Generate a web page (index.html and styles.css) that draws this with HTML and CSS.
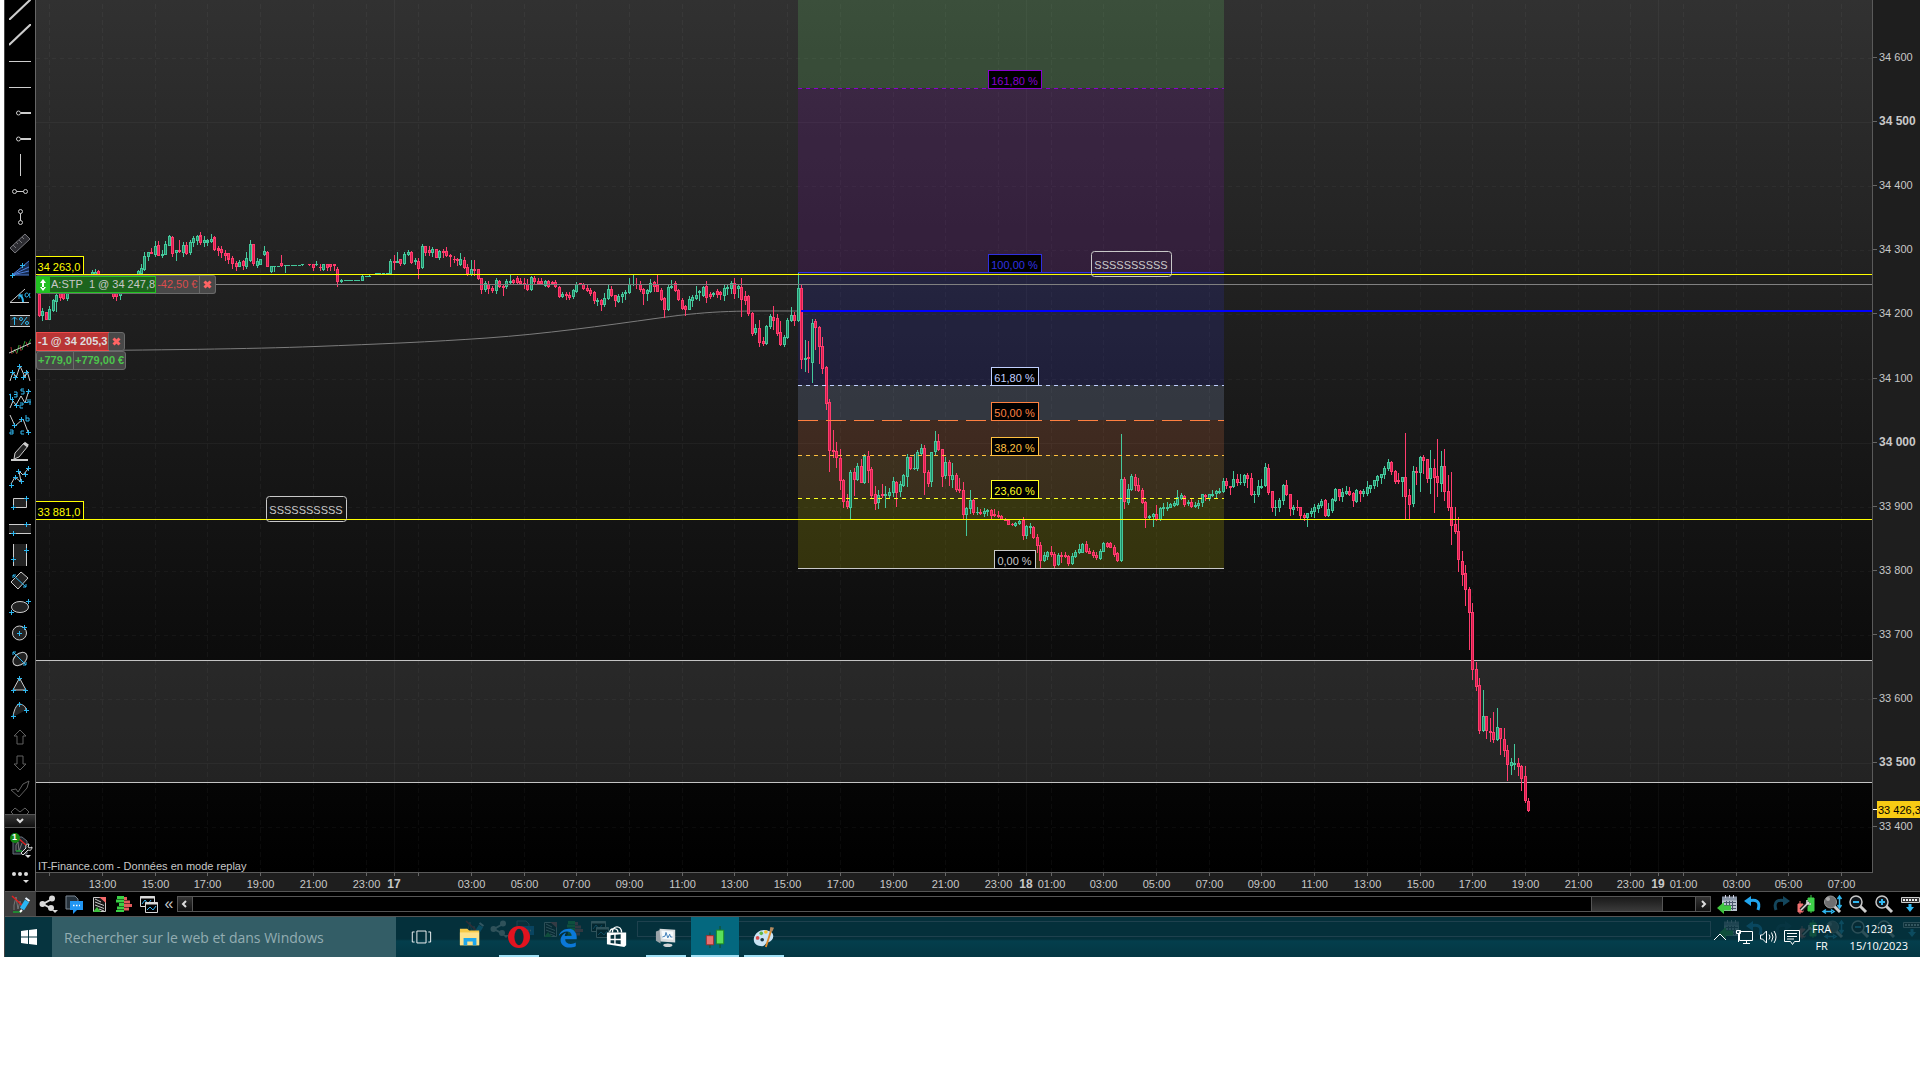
FILE: index.html
```
<!DOCTYPE html>
<html lang="fr">
<head>
	<meta charset="utf-8">
	<title>IT-Finance.com</title>
	<link rel="stylesheet" href="styles.css">
</head>
<body>
<svg class="defs" width="0" height="0">
	<symbol id="i-pencil" viewBox="0 0 24 24"><g fill="none"><path d="M5 18v-5l2-8 2 12 2-8 2 8" stroke="#777"/><path d="M3 4L14 14" stroke="#e02020" stroke-width="1.500"/><path d="M4 20h8" stroke="#19a030" stroke-width="1.500"/><path d="M13 17L18 9" stroke="#29b5f5" stroke-width="5"/><path d="M16.500 6l4 3" stroke="#e8f4ff" stroke-width="2"/><path d="M11 20l2-2" stroke="#fff" stroke-width="2"/></g></symbol>
	<symbol id="i-share" viewBox="0 0 24 24"><g fill="#d8d8d8" stroke="#d8d8d8" stroke-width="2"><path d="M15 7L6 12l9 5" fill="none"/><circle cx="15" cy="6.500" r="2"/><circle cx="5.500" cy="12" r="2"/><circle cx="14" cy="16" r="2"/><path d="M15 18h6l-3 3z" stroke="none"/></g></symbol>
	<symbol id="i-chat" viewBox="0 0 24 24"><path d="M4 4h9l3 3v10H4z" fill="#26323c" stroke="#7c8894"/><path d="M8 9h13v9h-6l-4 4v-4H8z" fill="#2196f3"/><path d="M11 13.500h7" stroke="#fff" stroke-width="1.500" stroke-dasharray="1.500 1.500"/></symbol>
	<symbol id="i-doc" viewBox="0 0 24 24"><path d="M6.500 5.500h12v14h-12z" fill="#151515" stroke="#ccc"/><path d="M8 7l6 3M8 10l9 3.500M8 13l9 3.500M12 17l5 2" stroke="#ccc"/><path d="M12 5h7v6z" fill="#f46a6a"/><path d="M6 20l4-5 4 5z" fill="#3fc13f"/></symbol>
	<symbol id="i-depth" viewBox="0 0 24 24"><path d="M5 4h7v3H5zM4 7.500h8v3H4zM7 11h5v3H7zM5 14.500h7v3H5zM4 18h8v2H4z" fill="#39d045"/><path d="M12 5h3v3h-3zM12 8.500h6v3h-6zM12 12h8v3h-8zM12 15.500h5v3h-5z" fill="#e25b5b"/></symbol>
	<symbol id="i-windows" viewBox="0 0 24 24"><g fill="#000" stroke="#d8d8d8"><path d="M3.500 4.500h14v10h-14z"/><path d="M3 5.500h15" stroke-width="2"/><path d="M5 12l3-4 3 4 3-4" fill="none" stroke="#30b0f0"/><path d="M8.500 10.500h12v10h-12z"/><path d="M8 11.500h13" stroke-width="2"/><path d="M10 18l3-3 3 3 3-4" fill="none" stroke="#30b0f0"/></g></symbol>
	<symbol id="i-calendar" viewBox="0 0 24 24"><path d="M6 5h15v14H6z" fill="#b9c4d0"/><path d="M6 6.500h15" stroke="#8a97a8" stroke-width="4"/><path d="M9.500 3v3M13.500 3v3M17.500 3v3" stroke="#ccd"/><path d="M8 10.500h12M8 13.500h12M8 16.500h12M10.500 9v9M13.500 9v9M16.500 9v9" stroke="#49566a"/><path d="M1 16l7-6v3.500h7v5H8V22z" fill="#3fc63f"/></symbol>
	<symbol id="i-undo" viewBox="0 0 24 24"><path d="M6 9c8-2 13 0 10 9" fill="none" stroke="#21a6ef" stroke-width="3"/><path d="M2 9l7-5v10z" fill="#21a6ef"/></symbol>
	<symbol id="i-redo" viewBox="0 0 24 24"><path d="M18 9c-8-2-13 0-10 9" fill="none" stroke="#14465c" stroke-width="3"/><path d="M22 9l-7-5v10z" fill="#14465c"/></symbol>
	<symbol id="i-setup" viewBox="0 0 24 24"><path d="M4 12h5v8H4zM6 9v13" fill="#f07070" stroke="#f07070"/><path d="M14 6h6v13h-6zM17 3v18" fill="#3fd04a" stroke="#3fd04a"/><path d="M7 18l8-8" stroke="#222" stroke-width="4"/><path d="M7 18l8-8M13 8v4h4" stroke="#ddd" stroke-width="1.500" fill="none"/></symbol>
	<symbol id="i-zoomfit" viewBox="0 0 24 24"><path d="M14 14l6 6" stroke="#ccc" stroke-width="3"/><circle cx="10.500" cy="10" r="6" fill="#6e6e70" stroke="#999"/><circle cx="8" cy="7" r="2" fill="#aaa"/><path d="M19.500 5v10M17.500 7l2-3 2 3M17.500 13l2 3 2-3M4 19.500h8M6 17.500l-3 2 3 2M11 17.500l3 2-3 2" fill="none" stroke="#30b8f0" stroke-width="1.500"/></symbol>
	<symbol id="i-zoomout" viewBox="0 0 24 24"><path d="M14 14l6 6" stroke="#ccc" stroke-width="3"/><circle cx="10" cy="10" r="6" fill="#10151a" stroke="#c8c8c8" stroke-width="1.500"/><path d="M7 10h6" stroke="#30b8f0" stroke-width="2"/></symbol>
	<symbol id="i-zoomin" viewBox="0 0 24 24"><path d="M14 14l6 6" stroke="#ccc" stroke-width="3"/><circle cx="10" cy="10" r="6" fill="#10151a" stroke="#c8c8c8" stroke-width="1.500"/><path d="M7 10h6M10 7v6" stroke="#30b8f0" stroke-width="2"/></symbol>
	<symbol id="i-collapse" viewBox="0 0 24 24"><path d="M3.500 5.500h18v5h-18z" fill="#333" stroke="#ccc"/><path d="M5 8h15" stroke="#eee" stroke-width="2" stroke-dasharray="2 1"/><path d="M12 12v5" stroke="#30b8f0" stroke-width="3"/><path d="M8 15h8l-4 5z" fill="#30b8f0"/></symbol>
</svg>

<div class="app">
	<div class="workspace">
		<aside class="sidebar">
			<div class="tools">
				<button class="tool" aria-label="Ligne"><svg viewBox="0 0 22 22"><path d="M0 22L22 1" stroke-width="2"/></svg></button>
				<button class="tool" aria-label="Segment"><svg viewBox="0 0 22 22"><path d="M0 21L22 0" stroke-width="2"/></svg></button>
				<button class="tool" aria-label="Horizontale"><svg viewBox="0 0 22 22"><path d="M0 11.500h22"/></svg></button>
				<button class="tool" aria-label="Horizontale 2"><svg viewBox="0 0 22 22"><path d="M0 11.500h22"/></svg></button>
				<button class="tool" aria-label="Demi-droite"><svg viewBox="0 0 22 22"><circle cx="9.500" cy="11" r="2"/><path d="M12 11h10" stroke-width="2"/></svg></button>
				<button class="tool" aria-label="Demi-droite 2"><svg viewBox="0 0 22 22"><circle cx="9.500" cy="11" r="2"/><path d="M12 11h10" stroke-width="2"/></svg></button>
				<button class="tool" aria-label="Verticale"><svg viewBox="0 0 22 22"><path d="M11.500 0v22"/></svg></button>
				<button class="tool" aria-label="Segment horizontal"><svg viewBox="0 0 22 22"><circle cx="5.500" cy="11.500" r="2"/><circle cx="16.500" cy="11.500" r="2"/><path d="M7.500 11.500h7"/></svg></button>
				<button class="tool" aria-label="Segment vertical"><svg viewBox="0 0 22 22"><circle cx="11.500" cy="5.500" r="2"/><circle cx="11.500" cy="16.500" r="2"/><path d="M11.500 7.500v7"/></svg></button>
				<button class="tool" aria-label="Règle"><svg viewBox="0 0 22 22"><path d="M1 16L16 2l5 5L6 21z" fill="#2b2b30" stroke="#77777c"/><path d="M4 13l3 3M7 10l2 2M10 8l3 3M13 5l2 2" stroke="#77777c"/></svg></button>
				<button class="tool" aria-label="Eventail"><svg viewBox="0 0 22 22"><path d="M3 17L20 3v14z" fill="#15294d" stroke="none"/><path d="M3 17L20 3M3 17l17-8M3 17l17-4M3 17h17" stroke="#4d7fd8"/><path class="c" d="M1 17.500h5M3.500 15v5M11 7.500h5M13.500 5v5"/></svg></button>
				<button class="tool" aria-label="Angle"><svg viewBox="0 0 22 22"><path d="M20 18.500H1L16 5"/><path class="c" d="M10 11c3 1 4 4 4 7" stroke-width="2"/><path class="c" d="M10 15v-4h4"/><path class="c" d="M21 9c-2 5-5 5-5 2s4-3 5 3"/></svg></button>
				<button class="tool" aria-label="Pourcentage"><svg viewBox="0 0 22 22"><path d="M1 5h20v11H1z" fill="#222" stroke="none"/><path d="M1 5.500h20M1 16.500h20"/><path class="c" d="M5.500 15V7M3 9.500L5.500 7 8 9.500M12 15l6-8"/><circle class="c" cx="12" cy="9" r="1.500"/><circle class="c" cx="18" cy="13" r="1.500"/></svg></button>
				<button class="tool" aria-label="Régression"><svg viewBox="0 0 22 22"><path d="M2 11l1 7M6 14l2 4M11 9l1 6M17 6l2 5" stroke="#a03030"/><path d="M4 17l2-4M8 17l2-8M13 14l3-9M19 9l3-6" stroke="#2b9a34"/><path d="M0 17L22 7"/></svg></button>
				<button class="tool" aria-label="Figure"><svg viewBox="0 0 22 22"><path d="M1 19l3-9 3 6 4-12 5 11 2-6 3 10"/><path class="c" d="M1 10.500h5M3.500 8v5M8 4.500h5M10.500 2v5M15 10.500h5M17.500 8v5M4 15.500h5M6.500 13v5M12 15.500h5M14.500 13v5"/></svg></button>
				<button class="tool" aria-label="Vagues 12345"><svg viewBox="0 0 22 22"><path d="M1 20l3-7 3 4 5-9 4 7 4-13"/><path class="c" d="M0 7l1.500-1v5M5 4h3v5H5M5 6.500h3M15 1h-3v2h3v3h-3M11 15h3v2h-3v3h3M19 11v3h3M21 11v6M1 11.500h4M17 3.500h5M5 17.500h5M15 14.500h4M3.500 9v5M19.500 1v5M7.500 15v5"/></svg></button>
				<button class="tool" aria-label="Vagues abc"><svg viewBox="0 0 22 22"><path d="M1 1l5 11 8-7 5 13"/><path class="c" d="M17 1v6h3V4h-3M1 16h3v4H1v-2h3M15 17h-3v3h3M3 11.500h5M5.500 9v5M10 5.500h5M12.500 3v5M17 18.500h5M19.500 16v5"/></svg></button>
				<button class="tool" aria-label="Crayon"><svg viewBox="0 0 22 22"><path d="M6 13L15 3l4 3-9 11-5 2z" fill="#222"/><path d="M15 3l4 3" stroke-width="3"/><path d="M2 20h17" stroke-width="2"/></svg></button>
				<button class="tool" aria-label="Polyligne"><svg viewBox="0 0 22 22"><path d="M2 18L6 11l6 5-2-11 4 4 5-6"/><path class="c" d="M0 19.500h5M2.500 17v5M4 11.500h5M6.500 9v5M7 5.500h5M9.500 3v5M10 15.500h5M12.500 13v5M14 8.500h5M16.500 6v5M17 2.500h5M19.500 0v5"/></svg></button>
				<button class="tool" aria-label="Rectangle"><svg viewBox="0 0 22 22"><path d="M4.500 6.500h13v9h-13z" fill="#222"/><path class="c" d="M2 15.500h5M4.500 13v5M15 6.500h5M17.500 4v5"/></svg></button>
				<button class="tool" aria-label="Bande horizontale"><svg viewBox="0 0 22 22"><path d="M0 7h22v9H0z" fill="#222" stroke="none"/><path d="M0 6.500h22M0 15.500h22"/><path class="c" d="M2 15.500h5M4.500 13v5M15 6.500h5M17.500 4v5"/></svg></button>
				<button class="tool" aria-label="Bande verticale"><svg viewBox="0 0 22 22"><path d="M4 0h14v22H4z" fill="#222" stroke="none"/><path d="M4.500 0v22M17.500 0v22"/><path class="c" d="M2 15.500h5M4.500 13v5M15 6.500h5M17.500 4v5"/></svg></button>
				<button class="tool" aria-label="Rectangle incliné"><svg viewBox="0 0 22 22"><path d="M2 12L12 2l7 6L9 19z" fill="#222"/><path class="c" d="M4 5l13 12M4 8V5h3M17 14v3h-3"/></svg></button>
				<button class="tool" aria-label="Ellipse"><svg viewBox="0 0 22 22"><ellipse cx="11" cy="11" rx="8.500" ry="5.500" fill="#222"/><path class="c" d="M0 16.500h5M2.500 14v5M17 5.500h5M19.500 3v5"/></svg></button>
				<button class="tool" aria-label="Cercle"><svg viewBox="0 0 22 22"><circle cx="10.500" cy="11" r="7" fill="#222"/><path class="c" d="M8 11.500h5M10.500 9v5M13 5.500h5M15.500 3v5"/></svg></button>
				<button class="tool" aria-label="Ellipse inclinée"><svg viewBox="0 0 22 22"><ellipse cx="11" cy="11" rx="8" ry="5.500" transform="rotate(-40 11 11)" fill="#222"/><path class="c" d="M4 4l13 13M4 7V4h3M17 14v3h-3"/></svg></button>
				<button class="tool" aria-label="Triangle"><svg viewBox="0 0 22 22"><path d="M4 16L10.500 4 17 16z" fill="#222"/><path class="c" d="M8 4.500h5M10.500 2v5M2 16.500h5M4.500 14v5M14 16.500h5M16.500 14v5"/></svg></button>
				<button class="tool" aria-label="Arc"><svg viewBox="0 0 22 22"><path d="M4 17C5 8 9 3 11 4c4 1 6 3 6 6z" fill="#222" stroke="none"/><path d="M4 17C5 8 9 3 11 4c4 1 6 3 6 6"/><path class="c" d="M8 4.500h5M10.500 2v5M2 16.500h5M4.500 14v5M15 10.500h5M17.500 8v5"/></svg></button>
				<button class="tool off" aria-label="Flèche haut"><svg viewBox="0 0 22 22"><path d="M11 4l6 6h-3v8H8v-8H5z"/></svg></button>
				<button class="tool off" aria-label="Flèche bas"><svg viewBox="0 0 22 22"><path d="M11 18l6-6h-3V4H8v8H5z"/></svg></button>
				<button class="tool off" aria-label="Coche"><svg viewBox="0 0 22 22"><path d="M2 12l5-1 2 3 5-8 6-3-2 7-8 9z"/></svg></button>
				<button class="tool off" aria-label="Croix"><svg viewBox="0 0 22 22"><path d="M2 8l4-4 5 4 5-4 4 4-5 5 5 5-4 3-5-4-5 4-4-3 5-5z"/></svg></button>
			</div>
			<button class="more" aria-label="Suite"><svg viewBox="0 0 10 6"><path d="M2 1l3 3 3-3" fill="none" stroke="#ddd" stroke-width="2"/></svg></button>
			<button class="side-config" aria-label="Configuration"><svg viewBox="0 0 24 26"><path d="M4 5h9l5 4v13H4z" fill="#20252c" stroke="#68707c"/><path d="M7 19v-6l2-3 1 9 3-8" stroke="#777" fill="none"/><path d="M9 6l8 7" stroke="#e02020" stroke-width="1.500"/><path d="M7 19h6" stroke="#19a030" stroke-width="1.500"/><path d="M12 21l5-5c-1-3 1-4 3-4l-1 3 2 1 2-1c0 3-2 4-4 3l-5 5z" fill="#111" stroke="#ddd"/><circle cx="6" cy="6" r="5" fill="#138a13"/><path d="M16 23h6l-3 3z" fill="#ddd"/></svg><b>1</b></button>
			<button class="side-dots" aria-label="Autres"><svg viewBox="0 0 22 22"><g fill="#ddd" stroke="none"><circle cx="5" cy="9" r="2"/><circle cx="11" cy="9" r="2"/><circle cx="17" cy="9" r="2"/><path d="M14 15h6l-3 3z"/></g></svg></button>
		</aside>
		<main class="chart">
			<div class="chart-row">
				<div class="plot">
					<svg id="plot" class="plot-svg"></svg>
					<div class="order stop">
						<span class="grip"><svg viewBox="0 0 8 14"><path d="M4 1l3 4H1zM4 13l3-4H1zM3 4h2v6H3z" fill="#fff"/></svg></span>
						<span class="stp">A:STP&nbsp; 1 @ 34 247,8</span>
						<span class="loss">-42,50 €</span>
						<button class="close" aria-label="Annuler l'ordre"><svg viewBox="0 0 9 9"><path d="M1.500 1.500l6 6M7.500 1.500l-6 6"/></svg></button>
					</div>
					<div class="position">
						<div class="order">
							<span class="sell">-1 @ 34 205,3</span>
							<button class="close" aria-label="Fermer la position"><svg viewBox="0 0 9 9"><path d="M1.500 1.500l6 6M7.500 1.500l-6 6"/></svg></button>
						</div>
						<div class="order gain">
							<span>+779,0</span>
							<span>+779,00 €</span>
						</div>
					</div>
				</div>
				<svg id="prices" class="prices"></svg>
			</div>
			<svg id="times" class="times"></svg>
		</main>
	</div>

	<div class="bottom-bar">
		<button class="ico active" aria-label="Dessin"><svg><use href="#i-pencil"/></svg></button>
		<button class="ico" aria-label="Partager"><svg><use href="#i-share"/></svg></button>
		<button class="ico" aria-label="Commentaires"><svg><use href="#i-chat"/></svg></button>
		<button class="ico" aria-label="Ordres"><svg><use href="#i-doc"/></svg></button>
		<button class="ico" aria-label="Carnet"><svg><use href="#i-depth"/></svg></button>
		<button class="ico" aria-label="Fenêtres"><svg><use href="#i-windows"/></svg></button>
		<button class="fold" aria-label="Replier">«</button>
		<div class="scroller">
			<button class="arrow" aria-label="Reculer"><svg viewBox="0 0 8 8"><path d="M5 1L2 4l3 3"/></svg></button>
			<div class="track"><div class="thumb"></div></div>
			<button class="arrow" aria-label="Avancer"><svg viewBox="0 0 8 8"><path d="M3 1l3 3-3 3"/></svg></button>
		</div>
		<div class="bar-right">
			<button class="ico" aria-label="Calendrier"><svg><use href="#i-calendar"/></svg></button>
			<button class="ico" aria-label="Défaire"><svg><use href="#i-undo"/></svg></button>
			<button class="ico" aria-label="Refaire"><svg><use href="#i-redo"/></svg></button>
			<button class="ico" aria-label="Style"><svg><use href="#i-setup"/></svg></button>
			<button class="ico" aria-label="Ajuster"><svg><use href="#i-zoomfit"/></svg></button>
			<button class="ico" aria-label="Zoom arrière"><svg><use href="#i-zoomout"/></svg></button>
			<button class="ico" aria-label="Zoom avant"><svg><use href="#i-zoomin"/></svg></button>
			<button class="ico" aria-label="Réduire"><svg><use href="#i-collapse"/></svg></button>
		</div>
	</div>

	<footer class="taskbar">
		<!-- toolbar seen through the translucent bar -->
		<div class="ghost ghost-left">
			<svg><use href="#i-pencil"/></svg><svg><use href="#i-share"/></svg><svg><use href="#i-chat"/></svg><svg><use href="#i-doc"/></svg><svg><use href="#i-depth"/></svg><svg><use href="#i-windows"/></svg>
			<div class="ghost-track"></div>
		</div>
		<div class="ghost ghost-right">
			<svg><use href="#i-calendar"/></svg><svg><use href="#i-undo"/></svg><svg><use href="#i-redo"/></svg><svg><use href="#i-setup"/></svg><svg><use href="#i-zoomfit"/></svg><svg><use href="#i-zoomout"/></svg><svg><use href="#i-zoomin"/></svg><svg><use href="#i-collapse"/></svg>
		</div>
		<button class="start" aria-label="Démarrer"><svg viewBox="0 0 16 16"><path d="M0 2l7-1v6.500H0zM8 1l8-1v7.500H8zM0 8.500h7V15l-7-1zM8 8.500h8V16l-8-1z" fill="#fff"/></svg></button>
		<input class="search" type="text" placeholder="Rechercher sur le web et dans Windows" aria-label="Rechercher">
		<div class="apps">
			<button class="task" aria-label="Vue des tâches"><svg viewBox="0 0 24 24" fill="none" stroke="#fff"><path d="M7.500 5.500h10v13h-10zM5 6.500H2.500v11H5M20 6.500h2.500v11H20"/></svg></button>
			<button class="task" aria-label="Explorateur"><svg viewBox="0 0 24 24"><path d="M1 3h8l2 2h11v16H1z" fill="#f7c948"/><path d="M1 7h21v14H1z" fill="#fde28c"/><path d="M5 21v-8h14v8h-4v-4H9v4z" fill="#1ea7ec"/></svg></button>
			<button class="task run" aria-label="Opera"><svg viewBox="0 0 24 24"><ellipse cx="12" cy="12" rx="12" ry="12" fill="#e3131f"/><ellipse cx="12" cy="12" rx="5" ry="9" fill="#06323d"/></svg></button>
			<button class="task" aria-label="Edge"><svg viewBox="0 0 24 24"><path d="M2 11C4 1 21-1 21.500 12v2.500H9c0 6 8 6 11.500 3.500v4C12 26 3 22 4 14c.5-3 3-6 6-7-1 1.500-1.500 2-1.500 4H16c0-7-10-6-14 0z" fill="#0b78d8"/></svg></button>
			<button class="task" aria-label="Store"><svg viewBox="0 0 24 24"><path d="M1 7h21v14l-2 2-19-3z" fill="#fff"/><path d="M7 7c0-8 10-8 10 0M4 7c1-6 9-5 9 0" fill="none" stroke="#fff" stroke-width="1.500"/><path d="M5 10l4-.5V14H5zM10.500 9.500L16 9v5h-5.500zM5 15.500h4V19l-4-.5zM10.500 15.500H16V20l-5.500-.8z" fill="#06323d"/></svg></button>
			<button class="task run" aria-label="Moniteur"><svg viewBox="0 0 24 24"><path d="M1 6l5-2v15l-5-3z" fill="#9aa3a8"/><path d="M5 3l17 1v14L6 17z" fill="#d9dddf"/><path d="M7 5l13 1v9l-12-1z" fill="#f5fafc"/><path d="M8 12l3-1 1-4 2 6 2-4 1 3h2" fill="none" stroke="#3577b5"/><ellipse cx="14" cy="21" rx="5" ry="2" fill="#cfd3d5"/></svg></button>
			<button class="task run current" aria-label="Plateforme"><svg viewBox="0 0 24 24"><path d="M6.500 7v17M17.500 0v24" stroke="#1a4c1a"/><path d="M2.500 10.500h8v10h-8z" fill="#e87272" stroke="#9c2a2a"/><path d="M13.500 4.500h8v15h-8z" fill="#5ae05a" stroke="#1d8a1d"/></svg></button>
			<button class="task run" aria-label="Paint"><svg viewBox="0 0 24 24"><path d="M1 13C3 5 12 2 19 6c5 3 4 10-3 12-3 1-3 4-6 4-6 0-10-3-9-9z" fill="#c9e3f4"/><circle cx="5" cy="13" r="2" fill="#d94b4b"/><circle cx="9" cy="8" r="2" fill="#5fb848"/><circle cx="14" cy="6.500" r="2" fill="#f1c232"/><circle cx="10" cy="15" r="2" fill="#17333e"/><path d="M14 23l6-19" stroke="#e08a2c" stroke-width="2"/><path d="M19 1l4 1-2 4h-3z" fill="#b48a60"/></svg></button>
		</div>
		<div class="tray">
			<svg viewBox="0 0 20 20"><path d="M4 13l6-6 6 6"/></svg>
			<svg viewBox="0 0 20 20"><path d="M5.500 4.500h13v9h-13zM12.500 14v3M9 16.500h7M2.500 3.500h4v3h-4zM4.500 7v8"/></svg>
			<svg viewBox="0 0 20 20"><path d="M2.500 8v4h2l4 4V4l-4 4zM11 7.500q2 2.500 0 5M13.500 5.500q3 4.500 0 9M16 4q4 6 0 12"/></svg>
			<svg viewBox="0 0 20 20"><path d="M2.500 3.500h15v11h-5l-2 3-2-3h-6zM5 6.500h10M5 9.500h10M5 12h7"/></svg>
			<div class="lang"><span>FRA</span><span>FR</span></div>
			<div class="clock"><span>12:03</span><span>15/10/2023</span></div>
		</div>
	</footer>
</div>
<script src="chart.js"></script>
</body>
</html>
```

FILE: styles.css
```
* {
	box-sizing: border-box;
}

body {
	margin: 0;
	background: #fff;
	font: 11px "Liberation Sans", Arial, sans-serif;
	color: #c8c8c8;
}

button {
	margin: 0;
	padding: 0;
	border: none;
	background: none;
	color: inherit;
	font: inherit;
	cursor: pointer;
}

svg {
	display: block;
}

.defs {
	position: absolute;
}

.app {
	margin-left: 4px;
	border-left: 1px solid #444;
	background: #000;
}

.workspace {
	display: flex;
	border-bottom: 1px solid #555;
}

/* drawing tools */
.sidebar {
	display: flex;
	flex-direction: column;
	width: 31px;
	border-right: 1px solid #666;
}

.tools {
	height: 814px;
	overflow: hidden;
}

.tool {
	display: block;
	width: 30px;
	height: 26px;
	padding: 2px 4px;
}

.tool:first-child {
	margin-top: -4px;
}

.tool svg {
	width: 22px;
	height: 22px;
	fill: none;
	stroke: #cdcdcd;
}

.tool .c {
	stroke: #30b8f0;
}

.tool.off svg {
	stroke: #606060;
}

.more {
	display: flex;
	justify-content: center;
	align-items: center;
	height: 14px;
	border-top: 1px solid #555;
	border-bottom: 1px solid #555;
	background: linear-gradient(#333, #111);
}

.more svg {
	width: 10px;
	height: 6px;
}

.side-config {
	position: relative;
	height: 33px;
	padding: 3px 4px;
}

.side-config svg {
	width: 24px;
	height: 26px;
}

.side-config b {
	position: absolute;
	left: 7px;
	top: 4px;
	color: #fff;
	font-size: 9px;
}

.side-dots {
	height: 30px;
	padding: 4px;
}

.side-dots svg {
	width: 22px;
	height: 22px;
}

/* chart */
.chart {
	flex: 1;
	min-width: 0;
	background: #1e1e1e;
}

.chart-row {
	display: flex;
}

.plot {
	position: relative;
	flex: 1;
	min-width: 0;
	border-right: 1px solid #5a5a5a;
	border-bottom: 1px solid #5a5a5a;
	background: linear-gradient(#313131, #181818 50%, #000);
}

.plot-svg {
	width: 100%;
	height: 872px;
	shape-rendering: crispEdges;
}

.prices {
	width: 47px;
	height: 873px;
	shape-rendering: crispEdges;
}

.times {
	width: 100%;
	height: 18px;
	shape-rendering: crispEdges;
}

text {
	fill: #c8c8c8;
	font-size: 11px;
}

text.mid {
	text-anchor: middle;
}

text.strong {
	font-size: 12px;
	font-weight: bold;
}

.order {
	display: flex;
	width: max-content;
	height: 19px;
	border: 1px solid #6a6a6a;
	border-radius: 3px;
	background: #484848;
	line-height: 17px;
	white-space: nowrap;
}

.stop {
	position: absolute;
	left: 0;
	top: 275px;
	border-left: none;
}

.grip {
	display: flex;
	justify-content: center;
	align-items: center;
	width: 14px;
	background: #21c021;
}

.grip svg {
	width: 8px;
	height: 14px;
}

.stp {
	padding-left: 1px;
	border-right: 1px solid #22c322;
	background: #1d641d;
	box-shadow: inset 0 1px #22c322, inset 0 -1px #22c322;
}

.loss {
	padding: 0 1px;
	color: #dc4c4c;
}

.close {
	display: flex;
	justify-content: center;
	align-items: center;
	width: 16px;
	border-left: 1px solid #6a6a6a;
}

.close svg {
	width: 9px;
	height: 9px;
	stroke: #ff6464;
	stroke-width: 3;
}

.position {
	position: absolute;
	left: 0;
	top: 332px;
	font-weight: bold;
}

.sell {
	padding: 0 1px;
	background: #b93535;
	outline: 1px solid #f04a4a;
	color: #ddd;
}

.gain {
	color: #4cc44c;
}

.gain span {
	padding: 0 1px;
}

.gain span + span {
	border-left: 1px solid #6a6a6a;
}

/* bottom toolbar */
.bottom-bar {
	display: flex;
	align-items: center;
	height: 25px;
	border-bottom: 1px solid #555;
}

.ico {
	display: flex;
	flex: none;
	justify-content: center;
	align-items: center;
	width: 25px;
	height: 24px;
}

.ico svg, .ghost svg {
	width: 24px;
	height: 24px;
}

.ico.active {
	width: 31px;
	background: #3c3c3c;
}

.fold {
	width: 16px;
	font-size: 16px;
	line-height: 16px;
}

.scroller {
	display: flex;
	flex: 1;
	height: 16px;
	border: 1px solid #555;
}

.arrow {
	width: 14px;
	background: linear-gradient(#333, #111);
}

.arrow svg {
	width: 8px;
	height: 8px;
	margin: 0 auto;
	fill: none;
	stroke: #ddd;
	stroke-width: 2;
}

.track {
	display: flex;
	flex: 1;
	justify-content: flex-end;
	padding-right: 32px;
	border-left: 1px solid #555;
	border-right: 1px solid #555;
}

.thumb {
	width: 72px;
	border-left: 1px solid #555;
	border-right: 1px solid #555;
	background: linear-gradient(#191919, #3a3a3a);
}

.bar-right {
	display: flex;
	gap: 1px;
	width: 205px;
	margin-left: 4px;
	overflow: hidden;
}

/* windows taskbar */
.taskbar {
	position: relative;
	display: flex;
	height: 40px;
	overflow: hidden;
	background: linear-gradient(#04303b 55%, #043e4c 60%, #043743);
	color: #fff;
	font: 11px "Open Sans", "Noto Sans", sans-serif;
}

.ghost {
	position: absolute;
	top: 0;
	display: flex;
	height: 24px;
	opacity: 0.2;
}

.ghost-left {
	left: 458px;
	right: 209px;
	gap: 1px;
}

.ghost-track {
	flex: 1;
	height: 16px;
	margin: 4px 0 0 24px;
	border: 1px solid #889;
}

.ghost-right {
	right: -4px;
	gap: 2px;
}

.start {
	width: 47px;
	background: #06343f;
}

.start svg {
	width: 16px;
	height: 16px;
	margin: 0 auto;
}

.search {
	width: 344px;
	padding: 0 12px;
	border: none;
	background: #335d66;
	color: #fff;
	font: 14px "Open Sans", "Noto Sans", sans-serif;
}

.search::placeholder {
	color: #93adb2;
	opacity: 1;
}

.apps {
	position: relative;
	display: flex;
	gap: 1px;
	margin-left: 1px;
}

.task {
	width: 48px;
	height: 40px;
}

.task svg {
	width: 22px;
	height: 22px;
	margin: 0 auto;
}

.run {
	background: linear-gradient(#9fe0f5, #9fe0f5) bottom / 40px 2px no-repeat;
}

.current {
	background: linear-gradient(#9fe0f5, #9fe0f5) bottom / 48px 2px no-repeat #04687f;
}

.tray {
	position: relative;
	display: flex;
	align-items: center;
	gap: 4px;
	margin-left: auto;
	padding-right: 12px;
}

.tray > svg {
	width: 20px;
	height: 20px;
	fill: none;
	stroke: #fff;
}

.lang, .clock {
	display: flex;
	flex-direction: column;
	align-items: center;
	line-height: 17px;
}

.lang {
	width: 32px;
}

.clock {
	margin-left: 8px;
}
```

FILE: chart.js
```
var NS = 'http://www.w3.org/2000/svg';
var LEFT = 36; // x of the plot's left edge

var plot = group('plot', LEFT);
var prices = group('prices', 0);
var times = group('times', LEFT);

function group(id, left) {
	return add(document.getElementById(id), 'g', {transform: 'translate(' + -left + ' 0)'});
}

function add(parent, name, attrs, text) {
	var el = document.createElementNS(NS, name);
	for (var key in attrs) {
		el.setAttribute(key, attrs[key]);
	}
	if (text) el.textContent = text;
	parent.appendChild(el);
	return el;
}

function hline(x1, x2, y, color, dash, width) {
	add(plot, 'line', {x1: x1, x2: x2, y1: y, y2: y, stroke: color, 'stroke-dasharray': dash || 'none', 'stroke-width': width || 1});
}

function box(x, y, w, h, color, text) {
	add(plot, 'rect', {x: x + 0.5, y: y + 0.5, width: w, height: h, fill: '#000', stroke: color});
	add(plot, 'text', {x: x + w / 2, y: y + 15, 'class': 'mid', style: 'fill:' + color}, text);
}

// price grid and axis
for (var i = 0; i < 13; i++) {
	var price = 34600 - i * 100;
	var gy = Math.round(58 + i * 64.1) + 0.5;
	var round = price % 500 === 0;
	hline(LEFT, 3000, gy, 'rgba(255,255,255,0.04)', round ? '' : '4 4');
	add(prices, 'line', {x1: 0, x2: 4, y1: gy - 1, y2: gy - 1, stroke: '#666'});
	add(prices, 'text', {x: 6, y: gy + 2.5, 'class': round ? 'strong' : ''}, String(price).replace(/(\d{3})$/, ' $1'));
}
add(prices, 'line', {x1: 0, x2: 4, y1: 809.5, y2: 809.5, stroke: '#fff'});
add(prices, 'rect', {x: 4, y: 801, width: 60, height: 17, fill: '#f7cb14'});
add(prices, 'text', {x: 5, y: 814, style: 'fill:#000'}, '33 426,3');

// time grid and axis
var days = [[394, '17'], [1026, '18'], [1658, '19']];
for (var k = 0; k < 35; k++) {
	var tx = Math.round(49.3 + k * 52.7) + 0.5;
	add(plot, 'line', {x1: tx, x2: tx, y1: 4, y2: 872, stroke: 'rgba(255,255,255,0.04)', 'stroke-dasharray': '5 3'});
	add(times, 'line', {x1: tx, x2: tx, y1: 0, y2: 3, stroke: '#666'});
	var hour = (11 + k * 2) % 24;
	if (k && k !== 7) {
		add(times, 'text', {x: tx, y: 15, 'class': 'mid'}, (hour < 10 ? '0' : '') + hour + ':00');
	}
}
days.forEach(function(d){
	add(plot, 'line', {x1: d[0] + 0.5, x2: d[0] + 0.5, y1: 0, y2: 872, stroke: 'rgba(255,255,255,0.04)'});
	add(times, 'line', {x1: d[0] + 0.5, x2: d[0] + 0.5, y1: 0, y2: 3, stroke: '#666'});
	add(times, 'text', {x: d[0], y: 15, 'class': 'mid strong'}, d[1]);
});

// grey zone
add(plot, 'rect', {x: LEFT, y: 660, width: 3000, height: 122, fill: 'rgba(255,255,255,0.12)'});
hline(LEFT, 3000, 660.5, '#c4c4c4');
hline(LEFT, 3000, 782.5, '#c4c4c4');

// fibonacci bands
[
	[0, 88, '100,200,100'],
	[88, 272, '122,20,160'],
	[272, 385, '50,50,185'],
	[385, 420, '155,175,220'],
	[420, 455, '220,115,65'],
	[455, 498, '215,155,65'],
	[498, 568, '195,190,0']
].forEach(function(b){
	add(plot, 'rect', {x: 798, y: b[0], width: 426, height: b[1] - b[0], fill: 'rgba(' + b[2] + ',0.2)'});
});

// moving average
add(plot, 'path', {
	d: 'M36 351C160 350 250 349 315 346.500S430 342 487 338S602 326 659 318S740 311 801 311',
	fill: 'none', stroke: '#7c7c7c', 'shape-rendering': 'auto'
});

// candles: u/d, x, high, body top, body bottom, low
var candles = [
	{x: 0, y: 0, sx: 3, data: 'd119 875 883 947 950,u127 925 935 946 960,d139 936 937 959 959,u148 920 928 958 958,u160 897 902 932 935,u169 875 885 905 933,d181 875 880 893 900,d190 875 880 895 899,u202 870 880 895 902,u276 812 816 830 835,u286 808 816 830 835,d296 811 815 830 840,d340 850 860 890 894,d349 850 860 888 902,u361 850 860 887 897,u414 812 815 835 835,u424 792 805 820 822,u434 758 768 808 812,u445 757 758 768 782,d454 745 758 760 761,u466 725 738 762 768,d475 723 737 765 767,u487 752 764 767 773,u497 725 733 762 764,u508 705 710 735 735,d518 710 711 760 768,u529 750 751 756 780,d539 722 750 754 757,u550 728 735 758 769,d560 728 735 760 763,u571 720 728 758 762,u580 710 716 728 740,u592 705 708 720 734,d602 700 707 728 732,u613 712 722 726 738,u622 718 722 726 727,u634 702 718 724 727,d643 710 713 748 751,d655 740 745 752 766,d665 738 748 753 768,d676 759 759 763 775,d685 759 762 777 788,d697 770 776 788 797,d709 783 792 800 808'},
	{x: 200, y: 210, sx: 2.613, data: 'd1 68 78 98 98,u12 80 92 98 100,u20 92 94 95 107,u30 72 87 95 95,d38 82 84 119 119,d48 108 115 118 121,d56 108 117 128 143,d67 122 129 135 152,d74 129 131 146 160,d85 141 146 160 176,d95 153 159 170 180,u104 150 157 168 170,d114 150 155 167 178,u122 126 144 168 176,u132 90 102 150 153,d140 102 104 160 167,u150 145 153 167 172,u158 147 148 163 163,u169 110 123 134 136,d176 125 127 170 170,u187 168 170 184 188,u195 168 168 170 185,u205 168 168 170 170,d213 135 159 166 168,u223 165 166 167 186,u232 165 165 166 166,u241 165 165 166 166,u250 165 165 166 166,u260 165 165 166 166,u268 162 163 164 165,d286 162 163 164 165,d297 162 163 172 180,u304 155 162 164 165,d315 162 171 173 180,u323 162 163 178 180,d333 162 163 172 180,d341 162 163 170 180,d352 162 162 165 180,d359 171 178 215 228,u369 209 212 214 216,u379 211 211 212 212,u388 211 211 212 212,u396 211 211 212 212,u406 211 211 212 212,u414 211 211 212 212,u425 197 199 212 212,u434 198 199 200 200,u443 195 198 200 200,u461 189 190 191 191,u470 190 190 191 191,u480 190 190 191 191,u489 190 190 191 191,u497 147 153 191 193,d508 135 153 158 177,u515 128 153 157 158,d525 147 149 160 165,u534 128 132 160 162,u544 122 126 133 135,d552 124 126 158 160,u562 145 150 155 163,d571 145 153 174 204,u581 102 108 173 176,d589 108 109 127 135,d599 108 122 126 136,u607 113 119 127 138,d618 118 119 141 143,u626 120 124 143 147,d636 117 123 126 142,d644 111 124 136 138,d655 132 136 140 168,d664 138 147 149 158,d673 145 149 152 165,u681 131 149 162 165,d691 143 151 172 174,d699 162 172 190 197,u710 150 178 192 197,d718 150 178 182 195,d728 177 179 205 207,d736 204 206 238 249,u746 213 220 238 243,d754 213 222 236 250,d765 228 235 242 246,u775 204 210 241 249,d783 210 214 228 231,d793 227 229 232 255,u801 207 214 230 234,u811 194 214 217 220,d820 207 210 218 221,d830 199 206 217 219,d837 205 214 221 222,d848 205 221 224 234,d856 208 224 238 240,u866 199 202 238 240,d874 198 204 214 222,d884 205 214 220 222,d893 205 213 220 222,u903 212 215 225 228,d911 212 214 228 231,d921 214 216 219 220,d929 210 217 229 231,d939 228 231 260 262,u948 246 253 260 262,d957 246 253 257 267,d966 248 256 262 267,u976 237 240 258 265,u984 216 223 243 246,d994 219 221 223 224,d1002 219 222 236 238,d1013 225 235 242 244,d1020 234 240 250 255,d1031 244 247 272 279,u1038 264 271 274 285,d1049 267 272 284 300,u1057 250 264 284 288,u1067 225 238 264 267,d1075 228 238 256 260,d1086 255 257 272 288,u1093 254 260 273 276,u1104 246 253 258 276,u1112 240 247 251 267,u1122 204 224 248 250,u1133 195 222 224 225,d1140 204 222 224 236,d1151 213 223 238 244,d1159 234 237 250 282,u1169 237 240 250 270,u1177 207 220 243 246,d1187 213 218 228 245,d1195 195 226 243 244,d1206 235 242 269 272,d1214 262 265 298 321,u1224 225 232 298 300,u1232 210 228 232 235,d1243 213 220 241 243,d1250 238 242 269 272,d1261 264 270 295 297,d1269 285 290 297 315,u1279 258 268 297 299,u1287 255 262 270 290,u1298 228 257 265 267,u1305 240 243 246 270,u1316 228 231 255 258,d1323 213 228 262 276,d1334 246 252 259 265,u1342 246 250 254 258,d1353 237 245 252 261,d1360 243 246 252 267,u1371 225 235 255 270,u1379 225 232 236 252,u1389 213 220 234 250,d1397 204 220 250 264,u1407 225 229 234 262,d1415 204 231 269 318,d1425 243 260 270 282,d1433 255 258 311 315,d1443 306 309 369 375,u1452 342 354 368 372,d1462 330 354 396 408,d1473 381 394 399 405,u1481 345 349 400 402,u1491 312 320 350 354,d1498 288 322 330 357,d1509 312 326 369 375,d1517 333 368 402 405,u1528 375 382 402 408,u1535 324 330 383 385,u1546 291 315 330 333,d1553 306 317 332 345'},
	{x: 780, y: 240, sx: 3, data: 'u55 98 144 242 243,d64 135 144 358 384,u77 300 355 359 393,d86 303 352 356 396,u97 237 249 368 426,d106 237 243 263 327,d118 258 262 320 369,d127 291 319 385 399,d140 378 381 491 507,d149 477 487 632 693,d160 570 630 635 653,d169 606 634 653 682,d181 627 654 721 747,d190 717 720 785 801,d203 762 784 799 804,u211 690 696 801 837,d223 684 696 718 765,u232 669 679 717 720,d244 657 679 727 728,u253 642 648 727 729,d265 633 648 692 726,d274 681 688 767 773,d286 738 763 789 807,u295 752 766 788 804,d307 732 763 766 773,u316 740 762 766 801,u328 744 757 765 774,u340 711 724 757 768,d349 724 727 756 798,u361 723 733 754 768,u370 702 706 735 738,u382 642 652 708 738,d391 651 653 685 687,u403 642 684 686 687,u412 630 637 684 690,u424 612 625 639 642,d434 615 625 698 762,d445 690 698 729 740,u455 636 638 725 738,u466 573 603 635 646,d475 582 603 628 632,d487 627 629 708 740,u496 651 667 705 714,d508 660 667 705 735,u517 669 705 717 741,d529 699 705 747 754,d538 714 748 752 756,d550 726 751 822 837,u559 801 804 823 885,u571 750 780 805 819,d580 777 781 817 823,u592 801 816 818 824,d601 808 816 820 824,u613 804 814 821 829,u622 807 811 815 825,d634 807 812 826 836,d643 807 822 827 828,d655 813 826 829 831,d664 826 829 837 838,d676 834 837 840 841,d685 838 841 853 854,d697 850 852 854 855,u706 848 851 856 860,u718 840 843 851 853,d730 831 842 887 899,u740 855 858 886 896,u751 850 860 863 879,d760 860 862 891 895,d772 882 892 916 936,d781 906 915 962 984,u793 936 947 961 965,u802 933 937 949 957,d814 919 937 943 950,d823 938 943 976 984,u835 939 946 974 976,d844 936 947 950 966,d856 937 946 949 951,d865 945 948 971 975,u877 940 948 970 972,u886 930 936 948 952,u898 912 928 938 940,u907 909 913 936 938,d919 903 913 935 937,d928 925 935 939 940,d940 930 937 946 951,d949 936 946 953 959,u961 927 933 954 957,u970 908 910 933 935,d982 906 910 919 922,d991 906 909 921 923,d1003 915 921 942 948,d1012 936 940 960 963,u1024 582 717 960 963,d1033 711 717 784 804,u1045 732 747 788 792,u1054 702 709 748 750,d1066 702 711 737 752,d1075 714 735 750 753,d1087 744 751 788 791,d1096 783 786 832 861,u1108 825 830 832 835,u1120 819 823 829 858,d1129 795 823 838 842,u1141 801 806 837 840,u1150 789 801 805 826,u1162 788 802 804 810,u1171 789 793 801 803,u1183 783 791 796 798,u1192 750 772 794 796,u1204 759 766 776 778,d1213 765 768 793 798,u1225 780 786 790 796,d1234 777 787 799 801,u1246 786 796 799 801,u1255 780 789 797 804'},
	{x: 1200, y: 400, sx: 3, data: 'u7 282 284 307 318,d16 282 286 290 300,u28 282 284 294 300,u37 270 282 285 290,u49 270 273 281 294,u58 264 273 276 279,u70 234 243 275 276,d79 234 244 257 264,d91 258 259 263 282,u100 213 238 260 261,d112 222 237 248 255,u121 222 246 248 252,u133 222 226 248 255,d142 219 226 236 262,d154 219 235 284 285,u163 273 282 284 306,u175 240 259 284 288,u184 237 258 261 264,u196 189 202 257 258,d205 192 205 278 282,d217 273 275 321 333,u226 300 321 323 345,u238 294 301 321 333,u250 252 255 302 312,d259 240 256 282 285,d271 282 284 325 345,u280 315 322 328 342,d292 300 321 323 330,d301 321 322 346 354,d313 339 346 352 362,u322 339 340 353 378,u334 324 333 341 348,u343 312 322 334 351,u355 309 316 325 336,u364 297 304 317 322,d376 297 300 347 348,u385 309 328 347 348,u397 294 298 331 336,u406 264 268 300 303,d418 267 269 290 300,u427 264 277 290 303,u439 258 273 280 282,d448 261 274 282 285,d460 276 280 302 318,u469 267 271 304 306,d481 270 274 280 303,u490 267 273 280 288,u502 243 262 280 285,u511 255 257 265 276,u523 240 241 257 264,u532 225 229 241 258,u544 222 223 233 249,u553 198 205 223 234,u565 177 187 206 210,d574 183 187 214 222,d586 210 214 243 249,d595 219 241 245 249,u607 231 233 244 288,d616 99 233 290 354,d628 267 287 313 354,u640 198 214 311 318,d649 201 214 217 252,u661 168 172 217 273,d670 165 172 181 219,d682 178 179 236 246,u691 150 206 236 279,d703 177 206 232 336,d712 117 229 247 288,u724 153 199 250 273,d733 147 199 275 300,d745 225 274 322 330,d754 216 322 377 432,d766 321 373 395 399,d775 351 394 479 513,d787 453 484 524 555,d796 495 520 569 615,d808 561 568 637 747,d817 609 637 809 837,d829 786 808 860 870,d838 834 856 992 999,u850 870 949 992 993,d859 948 949 992 1014,d871 954 993 996 1023,d880 936 997 1018 1026,u892 924 982 1019 1020,d901 984 985 1016 1062,d913 984 1018 1051 1068,d922 1035 1051 1094 1140,u934 1074 1087 1097 1122,u943 1032 1089 1092 1107,d955 1074 1090 1100 1125,d964 1095 1099 1136 1170,d976 1098 1129 1202 1206,d985 1194 1203 1232 1233'}
];

candles.forEach(function(part){
	part.data.split(',').forEach(function(item){
		var up = item[0] === 'u';
		var v = item.slice(1).split(' ').map(Number);
		var x = Math.floor(part.x + v[0] / part.sx);
		var y = v.map(function(n){ return part.y + Math.floor(n / 3); });
		var color = up ? '#45c89c' : '#ff3d6e';
		add(plot, 'rect', {x: x, y: y[1], width: 1, height: y[4] - y[1] + 1, fill: color});
		add(plot, 'rect', {x: x - 1, y: y[2], width: 3, height: y[3] - y[2] + 1, fill: color});
		if (y[3] - y[2] > 1) {
			add(plot, 'rect', {x: x, y: y[2] + 1, width: 1, height: y[3] - y[2] - 1, fill: up ? '#208c68' : '#d81b4e'});
		}
	});
});

// fibonacci levels
hline(798, 1224, 88.5, '#8a00d0', '4 4');
hline(798, 1224, 272.5, '#3030e0');
hline(798, 1224, 385.5, '#c0d0ff', '4 4');
hline(798, 1224, 420.5, '#ff8040', '20 8');
hline(798, 1224, 455.5, '#ffc040', '4 4');
hline(798, 1224, 498.5, '#ffff20', '4 4');
hline(798, 1224, 568.5, '#c8c8c8');
hline(LEFT, 3000, 274.5, '#ffff00');
hline(LEFT, 3000, 284.5, '#808080');
hline(801, 3000, 311, '#0000ff', '', 2);
hline(LEFT, 3000, 519.5, '#ffff00');

box(988, 70, 53, 18, '#8a00d0', '161,80 %');
box(988, 254, 53, 18, '#3030e0', '100,00 %');
box(991, 367, 47, 18, '#c0d0ff', '61,80 %');
box(991, 402, 47, 18, '#ff8040', '50,00 %');
box(991, 437, 47, 18, '#ffc040', '38,20 %');
box(991, 480, 47, 18, '#ffff20', '23,60 %');
box(994, 550, 41, 18, '#c8c8c8', '0,00 %');
box(35, 256, 48, 18, '#ffff00', '34 263,0');
box(35, 501, 48, 18, '#ffff00', '33 881,0');

// text notes
[[266, 496], [1091, 251]].forEach(function(n){
	add(plot, 'rect', {x: n[0] + 0.5, y: n[1] + 0.5, width: 80, height: 25, rx: 3, fill: 'none', stroke: '#c8c8c8', 'shape-rendering': 'auto'});
	add(plot, 'text', {x: n[0] + 40, y: n[1] + 18, 'class': 'mid'}, 'SSSSSSSSSS');
});
add(plot, 'text', {x: 38, y: 870}, 'IT-Finance.com - Données en mode replay');
```
